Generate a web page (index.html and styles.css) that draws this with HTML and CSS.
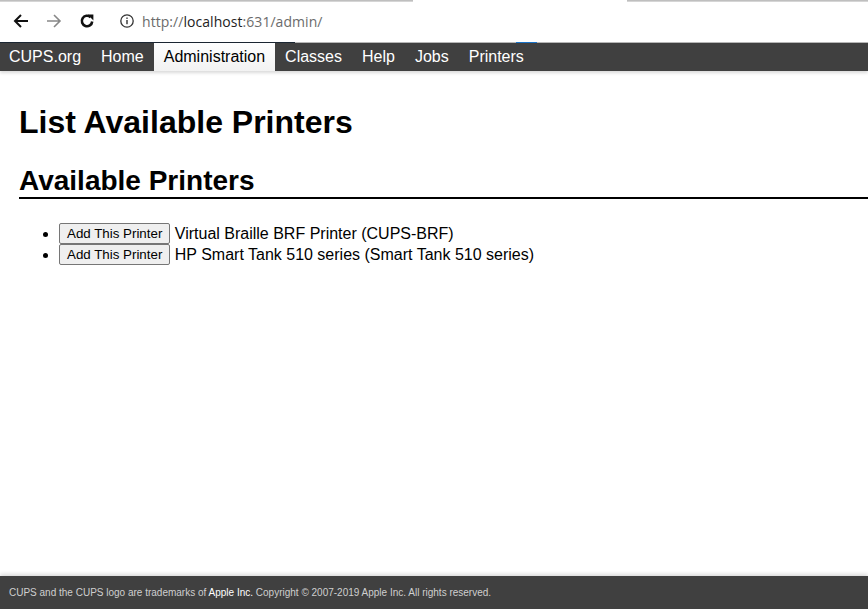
FILE: index.html
```html
<!DOCTYPE html>
<html lang="en">
<head>
<meta charset="utf-8">
<title>List Available Printers - CUPS</title>
<link rel="stylesheet" href="styles.css">
</head>
<body>
<div class="chrome">
  <div class="tabline"><span class="seg seg-left"></span><span class="seg seg-gap"></span><span class="seg seg-right"></span></div>
  <div class="toolbar">
    <svg class="ic" width="18" height="18" viewBox="0 0 18 18"><path d="M16 9H3M9 3L3 9l6 6" fill="none" stroke="#111" stroke-width="2"/></svg>
    <svg class="ic ic-fwd" width="18" height="18" viewBox="0 0 18 18"><path d="M2 9h13M9 3l6 6-6 6" fill="none" stroke="#888" stroke-width="1.6"/></svg>
    <svg class="ic ic-reload" width="18" height="18" viewBox="0 0 18 18"><path d="M14.2 9.5A5.2 5.2 0 1 1 12.6 5.2" fill="none" stroke="#111" stroke-width="2.6"/><path d="M9.6 2.6h5.8v5.8z" fill="#111"/></svg>
    <svg class="ic ic-info" width="16" height="16" viewBox="0 0 16 16"><circle cx="8" cy="8" r="6.2" fill="none" stroke="#333" stroke-width="1.3"/><rect x="7.3" y="7" width="1.4" height="4.2" fill="#333"/><rect x="7.3" y="4.5" width="1.4" height="1.4" fill="#333"/></svg>
    <span class="url">http://<b>localhost</b>:631/admin/</span>
  </div>
</div>
<div class="navline"><span class="nl-dark"></span><span class="nl-gray"></span><span class="nl-blue"></span><span class="nl-gray2"></span></div>
<nav class="header">
  <a class="item">CUPS.org</a>
  <a class="item">Home</a>
  <a class="item active">Administration</a>
  <a class="item">Classes</a>
  <a class="item">Help</a>
  <a class="item">Jobs</a>
  <a class="item">Printers</a>
</nav>
<main class="body">
  <h1>List Available Printers</h1>
  <h2>Available Printers</h2>
  <ul class="printers">
    <li><button class="btn">Add This Printer</button> Virtual Braille BRF Printer (CUPS-BRF)</li>
    <li><button class="btn">Add This Printer</button> HP Smart Tank 510 series (Smart Tank 510 series)</li>
  </ul>
</main>
<footer class="footer">CUPS and the CUPS logo are trademarks of <span class="apple">Apple Inc.</span> Copyright © 2007-2019 Apple Inc. All rights reserved.</footer>
</body>
</html>
```

FILE: styles.css
```css
html, body {
  margin: 0;
  padding: 0;
  height: 100%;
}
body {
  display: flex;
  flex-direction: column;
  font-family: "Liberation Sans", Arial, sans-serif;
  color: #000;
  background: #fff;
  overflow: hidden;
}
.chrome {
  height: 42px;
  flex: none;
  background: #fff;
  display: flex;
  flex-direction: column;
}
.tabline {
  display: flex;
  height: 2px;
}
.seg { display: block; height: 2px; }
.seg-left { width: 413px; background: linear-gradient(#b4b4b4, #e0e0e0); }
.seg-gap { width: 214px; background: #fff; }
.seg-right { flex: 1; background: linear-gradient(#b4b4b4, #e0e0e0); }
.toolbar {
  display: flex;
  align-items: center;
  height: 40px;
  padding-left: 12px;
  box-sizing: border-box;
  padding-bottom: 2px;
}
.ic { display: block; flex: none; }
.ic-fwd { margin-left: 15px; }
.ic-reload { margin-left: 15px; }
.ic-info { margin-left: 23px; }
.url {
  margin-left: 7px;
  font-family: "Open Sans", "Noto Sans", sans-serif;
  font-size: 14px;
  color: #6b6b6b;
  letter-spacing: 0.05px;
}
.url b { font-weight: normal; color: #222; }
.navline {
  display: flex;
  height: 1px;
  flex: none;
}
.navline span { display: block; height: 1px; }
.nl-dark { width: 295px; background: #1c2733; }
.nl-gray { width: 221px; background: #b8b8b8; }
.nl-blue { width: 21px; background: #1a73c8; }
.nl-gray2 { flex: 1; background: #b8b8b8; }
.header {
  flex: none;
  display: flex;
  height: 28px;
  background: #404040;
  box-shadow: 0 2px 3px rgba(0, 0, 0, 0.15);
  position: relative;
  z-index: 1;
}
.item {
  display: block;
  padding: 0 10px;
  line-height: 27px;
  font-size: 16px;
  color: #fff;
}
.item:first-child { padding-left: 9px; }
.item.active {
  background: linear-gradient(#fefefe, #f2f2f2);
  color: #000;
}
.body {
  flex: 1;
  padding: 0 0 0 19px;
}
h1 {
  font-size: 32px;
  font-weight: bold;
  margin: 33px 0 0;
  line-height: 37px;
}
h2 {
  font-size: 28px;
  font-weight: bold;
  margin: 24px 0 0;
  line-height: 32px;
  padding-bottom: 0;
  border-bottom: 2px solid #000;
}
.printers {
  margin: 24px 0 0;
  padding-left: 40px;
  font-size: 16px;
}
.printers li {
  line-height: 21px;
}
.btn {
  font-family: "Liberation Sans", Arial, sans-serif;
  font-size: 13.33px;
  color: #000;
  background: #efefef;
  border: 1px solid #767676;
  border-radius: 2px;
  padding: 1px 7px;
  height: 21px;
  margin: 0;
  vertical-align: bottom;
}
.footer {
  flex: none;
  height: 33px;
  background: #404040;
  color: #cfcfcf;
  font-size: 10px;
  line-height: 33px;
  padding-left: 9px;
  box-shadow: 0 -2px 4px rgba(0, 0, 0, 0.15);
}
.apple { color: #fff; }
```
